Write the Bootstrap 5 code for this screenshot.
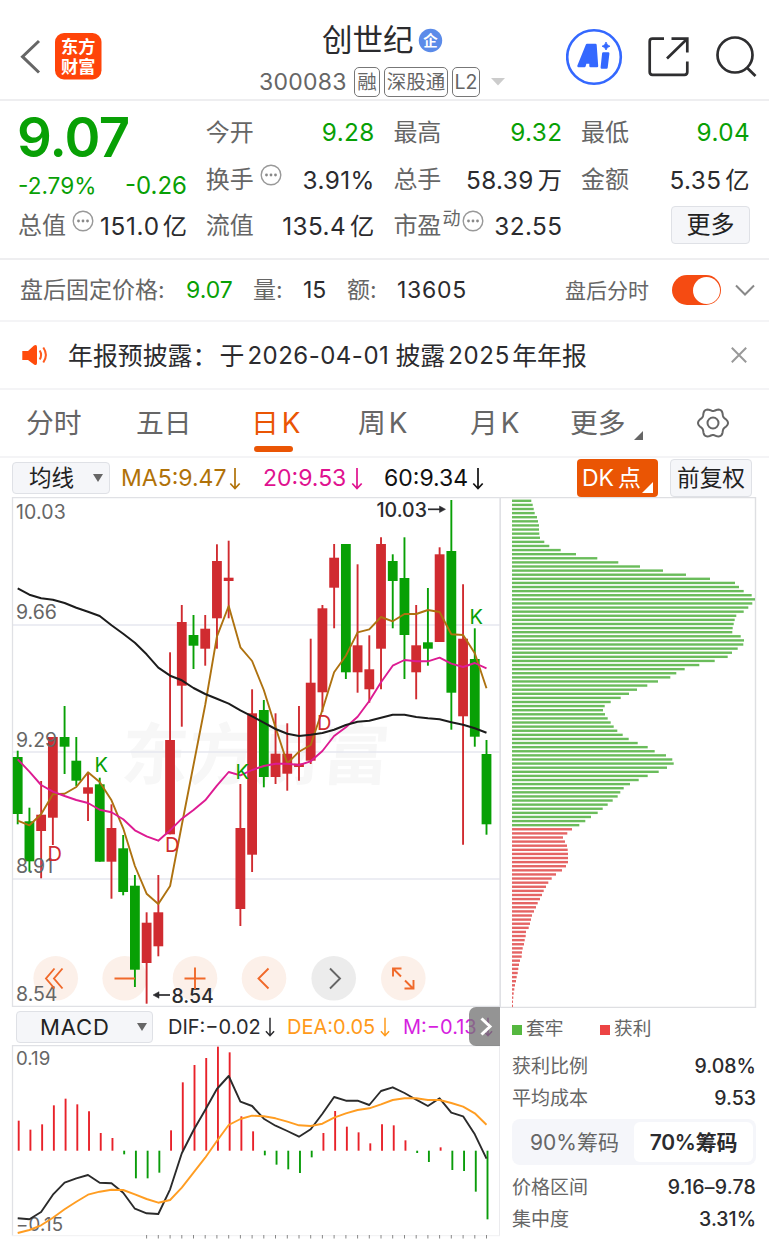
<!DOCTYPE html>
<html lang="zh-CN">
<head>
<meta charset="utf-8">
<meta name="viewport" content="width=device-width, initial-scale=1">
<title>创世纪 300083</title>
<link rel="stylesheet" href="https://cdn.jsdelivr.net/npm/bootstrap@5.3.0/dist/css/bootstrap.min.css">
<style>
:root{--up:#d02b30;--down:#08a005;--brand:#ea5504;--txt:#2b2b2e;--sub:#666;--line:#e9e9ed}
body{font-family:Inter,"Noto Sans CJK SC",sans-serif;line-height:1;color:var(--txt);background:#fff;width:769px;height:1239px;overflow:hidden;font-weight:400}
svg{display:block;flex:none}
svg text{font-family:Inter,"Noto Sans CJK SC",sans-serif}
span,button{white-space:nowrap}
.sub{color:var(--sub)}
.dn{color:var(--down)}
.hair{border-bottom:2px solid #f4f4f6}
.topbar{height:101px;display:grid;grid-template-columns:20px 35px 204px 307px 82px 67px 1fr;border-bottom:2px solid #eeeef0}
.stock-name{font-size:30.5px;height:36px;padding-left:63px;margin-top:22px}
.stock-code{font-size:23px;letter-spacing:.25px;width:95px}
.tagbox{border:1.5px solid #777;border-radius:5px;height:30px;color:var(--sub);font-size:19.5px;margin-right:4px;padding-top:1px}
.quote{height:159px;display:grid;grid-template-columns:168px 169px 169px 169px;column-gap:18.7px;grid-template-rows:49px 46px 46px;padding:7px 0 0 19px;border-bottom:2px solid #eeeef0;font-size:24.3px}
.quote .sub{font-size:24px}
.big-price{font-size:54.5px;font-weight:600;letter-spacing:-.8px;height:59px;margin-left:-2px}
.grow2{grid-row:1/3}
.num{letter-spacing:.4px}
.pill-btn{background:#f5f6f9;border:1.5px solid #dfe1e6;border-radius:4px;color:#222;padding:0}
.after{height:62px;display:grid;grid-template-columns:166px 67px 50px 44px 50px 168px 107px 63px 1fr;padding-left:20px;font-size:23px}
.toggle{width:49px;height:30px;border-radius:15px;background:#f54b12;padding:1.5px;display:flex;justify-content:flex-end}
.toggle i{width:27px;height:27px;border-radius:50%;background:#fff}
.notice{height:68px;display:grid;grid-template-columns:47px 663px 1fr;padding-left:21px;font-size:24.9px}
.tabs{height:68px;display:grid;grid-template-columns:110px 115px 107px 112px 100px 126px 1fr;padding:2px 0 0 26px;font-size:27.8px;color:var(--sub)}
.tabs .on{color:var(--brand)}
.tabs .on::after{content:"";position:absolute;left:3px;top:36px;width:39px;height:6px;border-radius:3px;background:var(--brand)}
.kk{margin-left:3px}
.marow{height:39px;display:grid;grid-template-columns:109px 142px 121px 193px 93px 82px;padding-left:12px;font-size:23px}
.marow>span{padding-top:2px}
.dk{background:var(--brand);color:#fff;border:0;border-radius:4px;width:81px;height:38px;padding:1px 0 0 5px;text-align:left;font-size:23px}
.panes{display:grid;grid-template-columns:500px 269px}
.macdbar{height:38px;display:grid;grid-template-columns:152px 119px 116px 1fr;padding:2px 0 0 16px;font-size:20px}
.more-ind{position:absolute;right:0;top:0;width:31px;height:39px;background:rgba(118,118,118,.78);border-radius:7px 0 0 7px}
.legend-row{height:43px;display:grid;grid-template-columns:14px 74px 14px 1fr;font-size:18.7px}
.sq{width:10px;height:10px}
.stat{width:244px;height:31.5px;font-size:19px}
.stat b{font-weight:500;font-size:19.5px}
.seg{width:244px;height:46px;background:#f5f6fa;border-radius:8px;padding:3px;font-size:21px;margin:5px 0 7px}
.seg .act{background:#fff;border-radius:6px;width:119px;font-weight:600;letter-spacing:-.2px}
</style>
</head>
<body>
<header class="topbar">
  <span></span>
  <svg width="35" height="100" viewBox="20 0 35 100"><path d="M39 41 22.5 56.7 39 72.5" fill="none" stroke="#666" stroke-width="3"/></svg>
  <svg width="60" height="100" viewBox="55 0 60 100"><rect x="55" y="33" width="46.5" height="46.5" rx="9" fill="#ff4409"/><g fill="#fff" font-size="17.2" font-weight="700"><text x="61" y="53.2">东方</text><text x="61" y="73">财富</text></g></svg>
  <div>
    <div class="stock-name d-flex align-items-center"><span>创世纪</span>
      <svg class="ms-1" width="25" height="25" viewBox="0 0 25 25"><circle cx="12.5" cy="12.5" r="11.7" fill="#5b8be9"/><text x="12.5" y="17.7" font-size="14.500" font-weight="700" fill="#fff" text-anchor="middle">企</text></svg></div>
    <div class="d-flex align-items-center" style="margin-top:9px">
      <span class="stock-code sub">300083</span>
      <span class="tagbox d-flex align-items-center justify-content-center" style="width:26px">融</span>
      <span class="tagbox d-flex align-items-center justify-content-center" style="width:64px">深股通</span>
      <span class="tagbox d-flex align-items-center justify-content-center" style="width:28px">L2</span>
      <svg width="14" height="8" viewBox="0 0 14 8" style="margin-left:7px"><path d="M0 0H14L7 7.5z" fill="#ccc"/></svg>
    </div>
  </div>
  <svg width="60" height="100" viewBox="566 0 60 100"><circle cx="594" cy="57" r="26.8" fill="#fff" stroke="#3468ff" stroke-width="2.6"/><g fill="#3468ff" stroke="#3468ff" stroke-linejoin="round"><path fill-rule="evenodd" stroke-width="2.4" d="M587 45H595.5L597 66H590.5V62.5H585.5L584.5 66H578.5ZM587.4 57.5H590.3V51.5Z"/><path stroke-width="2.4" d="M603.3 53.5H608.2L606.5 67.5H601.8Z"/><path stroke-width=".8" d="M606 42Q606.8 45.6 610 46.2 606.8 47 606 50 605.2 47 602 46.2 605.2 45.6 606 42Z"/></g></svg>
  <svg width="50" height="100" viewBox="648 0 50 100"><path d="M664 38.7H652.5Q649.7 38.7 649.7 41.5V72Q649.7 74.8 652.5 74.8H684.5Q687.3 74.8 687.3 72V61.5M671.5 38.7H687.3V52.5M687 39 667 58.5" fill="none" stroke="#2e2e30" stroke-width="2.7"/></svg>
  <svg width="54" height="100" viewBox="715 0 54 100"><circle cx="735" cy="55" r="17.5" fill="none" stroke="#2e2e30" stroke-width="2.7"/><path d="M746.8 67.5 755.5 76" stroke="#2e2e30" stroke-width="2.8"/></svg>
</header>

<section class="quote">
  <div class="grow2 dn"><div class="big-price d-flex align-items-center">9.07</div>
    <div class="d-flex justify-content-between align-items-center" style="margin:7px 0 0 -1px"><span style="font-size:22.6px">-2.79%</span><span style="font-size:24px">-0.26</span></div></div>
  <div class="d-flex justify-content-between align-items-center"><span class="sub">今开</span><span class="dn num">9.28</span></div>
  <div class="d-flex justify-content-between align-items-center"><span class="sub">最高</span><span class="dn num">9.32</span></div>
  <div class="d-flex justify-content-between align-items-center"><span class="sub">最低</span><span class="dn num">9.04</span></div>
  <div class="d-flex justify-content-between align-items-center"><span class="sub d-flex">换手<svg width="22" height="22" viewBox="0 0 22 22" style="margin:-4px 0 0 6px"><use href="#dots"/></svg></span><span class="num">3.91%</span></div>
  <div class="d-flex justify-content-between align-items-center"><span class="sub">总手</span><span class="num">58.39<span class="ms-1">万</span></span></div>
  <div class="d-flex justify-content-between align-items-center"><span class="sub">金额</span><span class="num">5.35<span class="ms-1">亿</span></span></div>
  <div class="d-flex justify-content-between align-items-center"><span class="sub d-flex" style="margin-left:-1px">总值<svg width="22" height="22" viewBox="0 0 22 22" style="margin:-4px 0 0 6px"><use href="#dots"/></svg></span><span style="letter-spacing:.7px">151.0<span style="margin-left:3px;letter-spacing:0">亿</span></span></div>
  <div class="d-flex justify-content-between align-items-center"><span class="sub">流值</span><span class="num">135.4<span class="ms-1">亿</span></span></div>
  <div class="d-flex justify-content-between align-items-center"><span class="sub d-flex">市盈<span style="font-size:18px;margin:-4px 2px 0 1px">动</span><svg width="22" height="22" viewBox="0 0 22 22" style="margin-top:-4px"><use href="#dots"/></svg></span><span class="num">32.55</span></div>
  <div class="d-flex justify-content-end align-items-center"><button class="pill-btn" style="width:79px;height:38px;font-size:24px;margin-top:-3px;padding-top:1px">更多</button></div>
</section>

<section class="after hair align-items-center">
  <span class="sub">盘后固定价格:</span><span class="dn">9.07</span><span class="sub">量:</span><span>15</span><span class="sub">额:</span><span style="letter-spacing:.7px">13605</span>
  <span class="sub" style="font-size:21px">盘后分时</span><span class="toggle"><i></i></span>
  <svg width="20" height="12" viewBox="0 0 20 12"><path d="M1 1.5 10 10.5 19 1.5" fill="none" stroke="#888" stroke-width="2"/></svg>
</section>

<section class="notice hair align-items-center">
  <svg width="28" height="22" viewBox="21 344 28 22"><path d="M22.3 351H28L34 345.5Q37 344 37 347V363Q37 366 34 364.500L28 360H22.300Z" fill="#ff4b0c"/><path d="M39.700 350.500Q42.500 355 39.700 359.500M43.300 347.500Q48.500 355 43.300 362.500" fill="none" stroke="#ff5a1e" stroke-width="2"/></svg>
  <span class="d-flex" style="padding-top:2px"><span>年报预披露</span><span style="width:27px">：</span><span style="margin-right:3px">于</span><span style="font-size:24px;letter-spacing:.5px;align-self:center;width:149px">2026-04-01</span><span style="margin-right:3px;margin-left:-1px">披露</span><span style="font-size:24px;align-self:center;width:64px;letter-spacing:.7px">2025</span>年年报</span>
  <svg width="16" height="16" viewBox="0 0 16 16"><path d="M.8.8 15.200 15.200M15.200.8.8 15.200" stroke="#999" stroke-width="2"/></svg>
</section>

<nav class="tabs hair align-items-center">
  <span>分时</span><span>五日</span><span class="on position-relative">日<span class="kk">K</span></span><span>周<span class="kk">K</span></span><span>月<span class="kk">K</span></span>
  <span class="d-flex align-items-end">更多<svg width="9" height="9" viewBox="0 0 9 9" style="margin-left:8px;margin-bottom:-2px"><path d="M9 0V9H0z" fill="#666"/></svg></span>
  <svg width="34" height="34" viewBox="-17 -17 34 34" fill="none" stroke="#666" stroke-width="2" style="margin-top:-2px"><path id="gear"/><circle r="5.500"/></svg>
</nav>

<section class="marow align-items-center">
  <button class="pill-btn d-flex align-items-center" style="width:98px;height:32px;font-size:22.5px;padding:1px 0 0 16px"><span>均线</span><svg width="10" height="8" viewBox="0 0 10 8" style="margin-left:19px"><path d="M0 0H10L5 8z" fill="#666"/></svg></button>
  <span class="d-flex align-items-center" style="color:#b07208">MA5:9.47<svg width="12" height="23" viewBox="0 0 12 23" stroke="#b07208" style="margin-left:3px"><use href="#down"/></svg></span>
  <span class="d-flex align-items-center" style="color:#e0118f">20:9.53<svg width="12" height="23" viewBox="0 0 12 23" stroke="#e0118f" style="margin-left:5px"><use href="#down"/></svg></span>
  <span class="d-flex align-items-center" style="color:#111">60:9.34<svg width="12" height="23" viewBox="0 0 12 23" stroke="#111" style="margin-left:4px"><use href="#down"/></svg></span>
  <button class="dk position-relative">DK<span style="margin-left:4px">点</span><svg class="position-absolute" style="right:5px;bottom:4px" width="11" height="11" viewBox="0 0 11 11"><path d="M11 0V11H0z" fill="#fff"/></svg></button>
  <button class="pill-btn" style="width:82px;height:38px;font-size:22.7px;padding-top:1px">前复权</button>
</section>

<main class="panes">
  <div>
    <svg id="kline" width="500" height="510" viewBox="0 497 500 510"></svg>
    <div class="macdbar align-items-center position-relative">
      <button class="pill-btn d-flex align-items-center" style="width:137px;height:32px;font-size:22px;padding-left:23px;letter-spacing:.9px"><span>MACD</span><svg width="10" height="8" viewBox="0 0 10 8" style="margin-left:27px"><path d="M0 0H10L5 8z" fill="#666"/></svg></button>
      <span class="d-flex align-items-center">DIF:−0.02<svg width="12" height="20" viewBox="0 0 12 23" stroke="#2b2b2e" style="margin-left:3px"><use href="#down"/></svg></span>
      <span class="d-flex align-items-center" style="color:#ff9a1a">DEA:0.05<svg width="12" height="20" viewBox="0 0 12 23" stroke="#ff9a1a" style="margin-left:4px"><use href="#down"/></svg></span>
      <span class="d-flex align-items-center" style="color:#d61ee0">M:−0.13<svg width="12" height="20" viewBox="0 0 12 23" stroke="#a010a8" style="margin-left:5px"><use href="#down"/></svg></span>
      <div class="more-ind"><svg width="31" height="39" viewBox="0 0 31 39"><path d="M12.500 11.500 21 19.500 12.500 27.500" fill="none" stroke="#fff" stroke-width="3"/></svg></div>
    </div>
    <svg id="macd" width="500" height="194" viewBox="0 1045 500 194"></svg>
  </div>
  <aside>
    <svg id="chips" width="269" height="511" viewBox="500 497 269 511"></svg>
    <div style="padding-left:12px">
      <div class="legend-row align-items-center sub"><i class="sq" style="background:#55b83f"></i><span>套牢</span><i class="sq" style="background:#ec4444"></i><span>获利</span></div>
      <div class="stat d-flex justify-content-between align-items-center"><span class="sub">获利比例</span><b>9.08%</b></div>
      <div class="stat d-flex justify-content-between align-items-center"><span class="sub">平均成本</span><b>9.53</b></div>
      <div class="seg d-flex"><span class="sub flex-fill d-flex align-items-center justify-content-center">90%筹码</span><span class="act d-flex align-items-center justify-content-center">70%筹码</span></div>
      <div class="stat d-flex justify-content-between align-items-center"><span class="sub">价格区间</span><b style="letter-spacing:.2px">9.16–9.78</b></div>
      <div class="stat d-flex justify-content-between align-items-center"><span class="sub">集中度</span><b>3.31%</b></div>
    </div>
  </aside>
</main>

<svg width="0" height="0" class="position-absolute"><defs>
  <g id="dots"><circle cx="11" cy="11" r="9.800" fill="none" stroke="#999" stroke-width="1.400"/><g fill="#888"><circle cx="6.500" cy="11" r="1.400"/><circle cx="11" cy="11" r="1.400"/><circle cx="15.500" cy="11" r="1.400"/></g></g>
  <path id="down" d="M6 1V21.500M1.300 16.500 6 21.500 10.700 16.500" fill="none" stroke-width="1.700"/>
</defs></svg>

<script src="https://cdn.jsdelivr.net/npm/bootstrap@5.3.0/dist/js/bootstrap.bundle.min.js"></script>
<script>
const X0 = 17.7, DX = 11.72, UP = '#d02b30', DOWN = '#08a005';
const px = i => (X0 + i * DX).toFixed(1);
const poly = (ys, color, w, f = v => v) =>
  `<polyline fill="none" stroke="${color}" stroke-width="${w}" stroke-linejoin="round" points="${ys.map((y, i) => px(i) + ',' + f(y).toFixed(1)).join(' ')}"/>`;

// candles: direction, high, body top, body bottom, low
const candles = [
 ['g',750.7,757,814,824.3],['g',807.7,821.3,861.3,871.7],['r',781,814.7,831,878.3],['r',737,737,817.7,845],
 ['g',706,737,746.7,774],['g',737,760.7,780.7,786],['r',772.3,787.3,793.7,821],['g',777.7,784.3,861.7,861.7],
 ['r',804.3,828,861.7,898.7],['g',835,848.3,892,895.3],['g',875,885.7,969.7,987],['r',912.3,922.7,963,1003.7],
 ['r',875,912.3,946.3,956.3],['r',652.3,740,834.3,834.3],['r',605,622,685.7,726.7],['g',615,635,645.7,669],
 ['r',615,628.7,648.7,665.7],['r',544.3,561,618.3,648.7],['r',540.7,577.7,581,618.3],['r',784,828,909,926],
 ['r',689.3,713.3,854.7,872],['g',700,710,777,787.3],['r',713.3,753.7,777,784],['r',723.3,753.7,773.7,790.7],
 ['r',706,763.7,767,780.7],['r',638.7,682.7,760.7,764],['r',605,608.3,692.3,712],['r',544,557.7,587.7,628.3],
 ['g',544,544,672.3,679],['r',564.3,645.3,672.3,692.7],['r',635.3,669.3,689.3,702.7],['r',537.3,544,648.7,689.3],
 ['g',554.3,561,581,628.3],['g',537.3,578,635,679],['r',605,645.3,672.3,699.3],['g',588,642.3,648.7,665.7],
 ['r',547.3,554.3,642,642],['g',500,551,692.7,729.7],['r',584.3,638.7,716.3,844.7],['g',628.3,659,736.7,746.7],
 ['g',740,754,824.3,834.7]];
const ma5 = [820.7,825.3,814.3,794.3,793.7,787,772.3,782,800.3,828.3,866,893.7,904,886,825,765,705,636.7,606,647.3,661,690,727.3,763.3,751.7,745,710,672.3,655.7,632.3,629.3,617,621.3,614,614,610,612,634.3,635,653.3,688.3];
const ma20 = [759.3,771.7,785,791.7,796,800,803,809.7,812.3,819.3,830.3,836.3,840.7,830.3,818.7,810,800.3,785.7,772,775.3,770,766,763.7,763.7,765,761.3,751,736,727.3,716.7,701,682.3,665.7,660,661.3,661.3,657.7,663.7,667,663,668.3];
const ma60 = [588.3,594.7,598.3,599.7,603,607.7,611.7,616,625.3,633.7,642.7,654.3,667.7,675.7,680.3,688,694,698.7,703.7,710.3,716.3,722.7,729,733.7,736,734.7,733,729.7,725,721.7,720.7,717.7,714.7,714.7,717,718.3,719.3,722.3,724.7,728.3,732.7];

let k = `<g transform="translate(120 779) skewX(-4)"><text font-size="67" font-weight="700" fill="#f7f7f7">东方财富</text></g>
<path d="M12.500 625H500M12.500 752H500M12.500 879H500" stroke="#e6e7ef" stroke-width="1.700"/>
<path d="M12.500 1007V497.500H500V1007M12 1006.500H500" fill="none" stroke="#e0e1e5" stroke-width="1.300"/>`;
[55.7,124.7,195,264,333.7,403.3].forEach((x, i) => k += `<circle cx="${x}" cy="978.300" r="22.300" fill="${i == 4 ? '#ececec' : '#fcf0e9'}"/>`);
candles.forEach(([d, h, t, b, l], i) => {
  const c = d == 'r' ? UP : DOWN, x = X0 + i * DX;
  k += `<path d="M${x} ${h}V${l}" stroke="${c}" stroke-width="1.900"/><rect x="${x - 4.9}" y="${t}" width="9.800" height="${b - t}" fill="${c}"/>`;
});
k += poly(ma5, '#ae7210', 1.9) + poly(ma20, '#dd1b92', 1.9) + poly(ma60, '#1c1c1c', 2);
k += `<g font-size="19.500" fill="#666"><text x="16" y="518.500" letter-spacing=".15">10.03</text><text x="16" y="619">9.66</text><text x="16" y="746.500">9.29</text><text x="16" y="873">8.91</text><text x="16" y="1000.500">8.54</text></g>
<g font-size="20" fill="${DOWN}"><text x="94.500" y="772">K</text><text x="235.500" y="779">K</text><text x="469.500" y="624">K</text></g>
<g font-size="20" fill="${UP}"><text x="47.500" y="861">D</text><text x="165" y="852">D</text><text x="317" y="730">D</text></g>
<g font-size="19.500" font-weight="500" fill="#2b2b2e"><text x="376.500" y="516.500">10.03</text><text x="171.500" y="1002.500">8.54</text></g>
<g stroke="#2b2b2e" stroke-width="1.700" fill="#2b2b2e"><path d="M428 509.300H441"/><path d="M439.500 506 445.500 509.300 439.500 512.600Z" stroke-width=".5"/><path d="M157 995H170"/><path d="M159 991.700 153 995 159 998.300Z" stroke-width=".5"/></g>
<g fill="none" stroke="#f0692a" stroke-width="1.900"><path d="M54.500 968.500 46 978.500 54.500 988.500M62.500 968.500 54 978.500 62.500 988.500M114.500 978.500H135M184.500 978.500H205.500M195 967.500V989"/>
<path d="M268.500 968.500 258.500 978.500 268.500 988.500"/><path d="M401 976.500 393 968.500M393 976.500V968.500H401.500M405 980.500 413 988.500M413.500 980V988.500H404.500"/></g>
<path d="M330 968.500 340 978.500 330 988.500" fill="none" stroke="#666" stroke-width="1.900"/>`;
document.getElementById('kline').innerHTML = k;

// MACD values are kept on a 1/3 px scale measured from y = 1000
const my = v => 1000 + v / 3;
const hist = [362,389,373,316,296,313,334,399,414,463,535,535,518,391,247,195,174,140,157,349,394,466,494,508,519,472,399,333,380,397,430,373,376,421,459,486,442,510,513,575,658];
const dif = [655,658,636,584,548,535,525,548,550,578,626,640,642,568,460,391,330,267,228,305,318,356,377,393,410,388,341,291,302,302,315,273,262,279,299,318,295,338,349,403,476];
const dea = [699,690,676,653,628,605,584,575,569,570,583,597,608,600,563,518,473,423,375,357,347,349,355,365,376,378,371,353,340,330,325,313,300,295,295,300,300,309,320,340,374];
let m = `<path d="M12.500 1236V1045.500H500M500 1045V1236" fill="none" stroke="#e0e1e5" stroke-width="1.300"/><path d="M12 1235.700H500" stroke="#f0f0f2"/>`;
m += `<g font-size="18.700" fill="#666"><text x="16" y="1064.800">0.19</text><text x="16" y="1230.800" letter-spacing=".2">−0.15</text></g>`;
hist.forEach((v, i) => m += `<path d="M${X0 + 1 + i * DX} 1150.700V${my(v)}" stroke="${v < 452 ? '#e8222a' : '#0a9c0a'}" stroke-width="1.900"/>`);
m += poly(dif, '#2b2b2b', 1.9, my) + poly(dea, '#ff9d22', 1.9, my);
for (let i = 11; i < 41; i++) m += `<path d="M${px(i)} 1235V1238.500" stroke="#888" stroke-width="1"/>`;
document.getElementById('macd').innerHTML = m;

// chip distribution, bar ends on a 1/3 px scale measured from x = 500
const chips = [94,98,101,104,111,114,117,117,118,120,133,148,182,228,292,355,420,489,558,630,705,717,731,755,765,757,745,731,709,704,701,698,697,722,732,730,713,696,683,644,598,554,529,511,474,442,411,387,362,332,314,309,315,323,332,341,352,368,386,413,443,464,498,517,521,501,476,443,416,390,371,361,353,338,323,308,293,273,256,238,216,202,189,195,201,203,204,204,204,198,186,168,155,145,138,131,126,120,113,108,102,96,93,90,86,78,77,74,72,68,66,65,60,57,55,53,50,48,45,43,41,40,39,39];
let c = `<path d="M500 497.500H755.500V1007.500H500" fill="none" stroke="#dedfe2" stroke-width="1.400"/><path d="M500.500 497V1008" stroke="#e0e1e5"/>`;
chips.forEach((v, i) => c += `<rect x="512" y="${(499.6 + i * 4.106).toFixed(2)}" width="${((v - 36) / 3).toFixed(1)}" height="2.400" fill="${i < 80 ? '#6abc5b' : '#e56464'}"/>`);
document.getElementById('chips').innerHTML = c;

// six-lobed gear outline
let g = '';
for (let a = 0; a <= 360; a += 4) {
  const r = 13.5 + 1.5 * Math.cos(6 * a * Math.PI / 180), t = a * Math.PI / 180;
  g += (a ? 'L' : 'M') + (r * Math.cos(t)).toFixed(2) + ' ' + (r * Math.sin(t)).toFixed(2);
}
document.getElementById('gear').setAttribute('d', g + 'Z');
</script>
</body>
</html>
